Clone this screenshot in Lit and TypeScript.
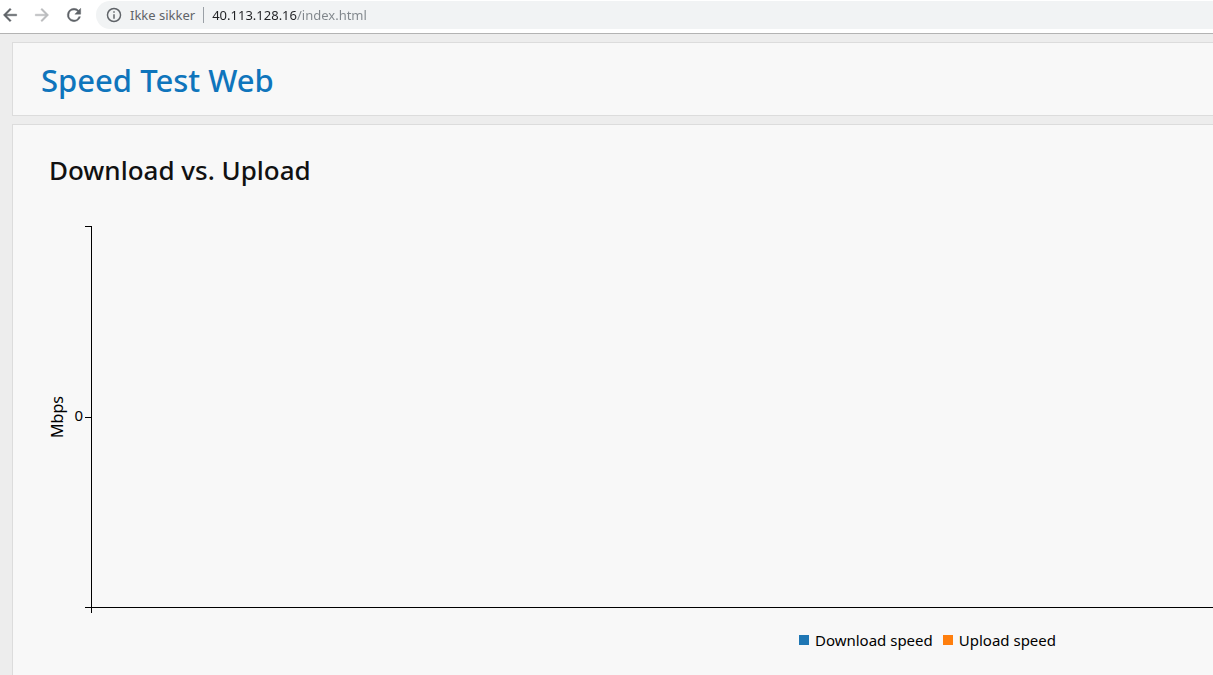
import { LitElement, html, css } from "lit";
import { customElement, property } from "lit/decorators.js";

@customElement("browser-bar")
class BrowserBar extends LitElement {
  static styles = css`
    :host {
      display: block;
    }
    .bar {
      display: flex;
      align-items: center;
      height: 28px;
      padding: 1px 0 4px;
      background: #fff;
      border-bottom: 1px solid #b3b3b3;
    }
    .nav {
      display: flex;
      gap: 12px;
      margin-right: 12px;
    }
    button {
      display: flex;
      align-items: center;
      padding: 0;
      border: 0;
      background: none;
      font: inherit;
      color: #5f6368;
    }
    svg {
      display: block;
      fill: currentColor;
    }
    .nav svg {
      stroke: currentColor;
      stroke-width: 0.5;
    }
    button:disabled {
      color: #babcbe;
    }
    .omnibox {
      display: flex;
      flex: 1;
      align-items: center;
      height: 28px;
      padding-left: 10px;
      border-radius: 14px 0 0 14px;
      background: #f1f3f4;
      font: 13px/20px "Noto Sans", "Open Sans", sans-serif;
    }
    .site {
      gap: 8px;
    }
    .divider {
      width: 1px;
      height: 16px;
      margin: 0 8px;
      background: #9aa0a6;
    }
    input {
      flex: 1;
      min-width: 0;
      height: 20px;
      padding: 0;
      border: 0;
      outline: 0;
      font: inherit;
      color: #202124;
      background: linear-gradient(to right, #202124 85px, #80868b 85px);
      -webkit-background-clip: text;
      background-clip: text;
      -webkit-text-fill-color: transparent;
    }
  `;

  render() {
    return html`
      <div class="bar">
        <div class="nav">
          <button aria-label="Tilbage">
            <svg width="20" height="20" viewBox="0 0 24 24">
              <path d="M20 11H7.83l5.59-5.59L12 4l-8 8 8 8 1.41-1.41L7.83 13H20v-2z" />
            </svg>
          </button>
          <button aria-label="Frem" disabled>
            <svg width="20" height="20" viewBox="0 0 24 24">
              <path d="M12 4l-1.41 1.41L16.17 11H4v2h12.17l-5.58 5.59L12 20l8-8z" />
            </svg>
          </button>
          <button aria-label="Genindlæs">
            <svg width="20" height="20" viewBox="0 0 24 24">
              <path
                d="M17.65 6.35A7.96 7.96 0 0 0 12 4a8 8 0 1 0 7.73 10h-2.08A6 6 0 1 1 12 6c1.66 0 3.14.69 4.22 1.78L13 11h7V4l-2.35 2.35z"
              />
            </svg>
          </button>
        </div>
        <div class="omnibox">
          <button class="site">
            <svg width="16" height="16" viewBox="1 1 22 22">
              <path
                d="M11 7h2v2h-2zm0 4h2v6h-2zm1-9a10 10 0 1 0 0 20 10 10 0 0 0 0-20zm0 18a8 8 0 1 1 0-16 8 8 0 0 1 0 16z"
              />
            </svg>
            <span>Ikke sikker</span>
          </button>
          <span class="divider"></span>
          <input type="text" aria-label="Adresse" value="40.113.128.16/index.html" />
        </div>
      </div>
    `;
  }
}

@customElement("speed-chart")
class SpeedChart extends LitElement {
  @property({ attribute: false })
  series = [
    { name: "Download speed", tone: "download" },
    { name: "Upload speed", tone: "upload" },
  ];

  static styles = css`
    :host {
      display: block;
      font: 15px/22px "Noto Sans", "Open Sans", sans-serif;
      color: #000;
    }
    .plot {
      display: block;
      width: 100%;
      height: 410px;
      overflow: visible;
    }
    .axis {
      stroke: #000;
      fill: none;
      shape-rendering: crispEdges;
    }
    .legend {
      display: flex;
      justify-content: flex-end;
      gap: 10px;
      margin: 0;
      padding: 10px 157px 24px 0;
      list-style: none;
    }
    .item {
      display: flex;
      align-items: center;
      gap: 6px;
    }
    .swatch {
      width: 10px;
      height: 10px;
    }
    .download {
      background: #1f77b4;
    }
    .upload {
      background: #ff7f0e;
    }
    .unit {
      font-size: 16px;
    }
  `;

  render() {
    return html`
      <svg class="plot" role="img" aria-label="Mbps">
        <text class="unit" transform="translate(14 208) rotate(-90)" text-anchor="middle">Mbps</text>
        <text x="34" y="212" text-anchor="end">0</text>
        <path class="axis" d="M36 17.5H42.5V404M36 208.5H42M36 398.5H42" />
        <line class="axis" x1="42" y1="398.5" x2="100%" y2="398.5" />
      </svg>
      <ul class="legend">
        ${this.series.map(
          (s) => html`<li class="item"><span class="swatch ${s.tone}"></span>${s.name}</li>`,
        )}
      </ul>
    `;
  }
}

@customElement("app-root")
class AppRoot extends LitElement {
  static styles = css`
    :host {
      display: flex;
      flex-direction: column;
      height: 100vh;
      overflow: hidden;
      background: #ededed;
      font-family: "Noto Sans", "Open Sans", sans-serif;
    }
    main {
      display: flex;
      flex: 1;
      flex-direction: column;
      gap: 8px;
      padding: 8px 0 0 12px;
    }
    .panel {
      border: 1px solid #dcdcdc;
      border-width: 1px 0 1px 1px;
      background: #f8f8f8;
    }
    .head {
      padding: 17px 28px 15px;
    }
    .body {
      flex: 1;
      padding: 25px 0 0 36px;
    }
    h1,
    h2 {
      margin: 0;
      font-weight: 500;
      line-height: 40px;
    }
    h1 {
      font-size: 31px;
      color: #0f75bc;
    }
    h2 {
      margin-bottom: 19px;
      font-size: 26px;
      color: #111;
    }
  `;

  render() {
    return html`
      <browser-bar></browser-bar>
      <main>
        <header class="panel head"><h1>Speed Test Web</h1></header>
        <section class="panel body">
          <h2>Download vs. Upload</h2>
          <speed-chart></speed-chart>
        </section>
      </main>
    `;
  }
}
